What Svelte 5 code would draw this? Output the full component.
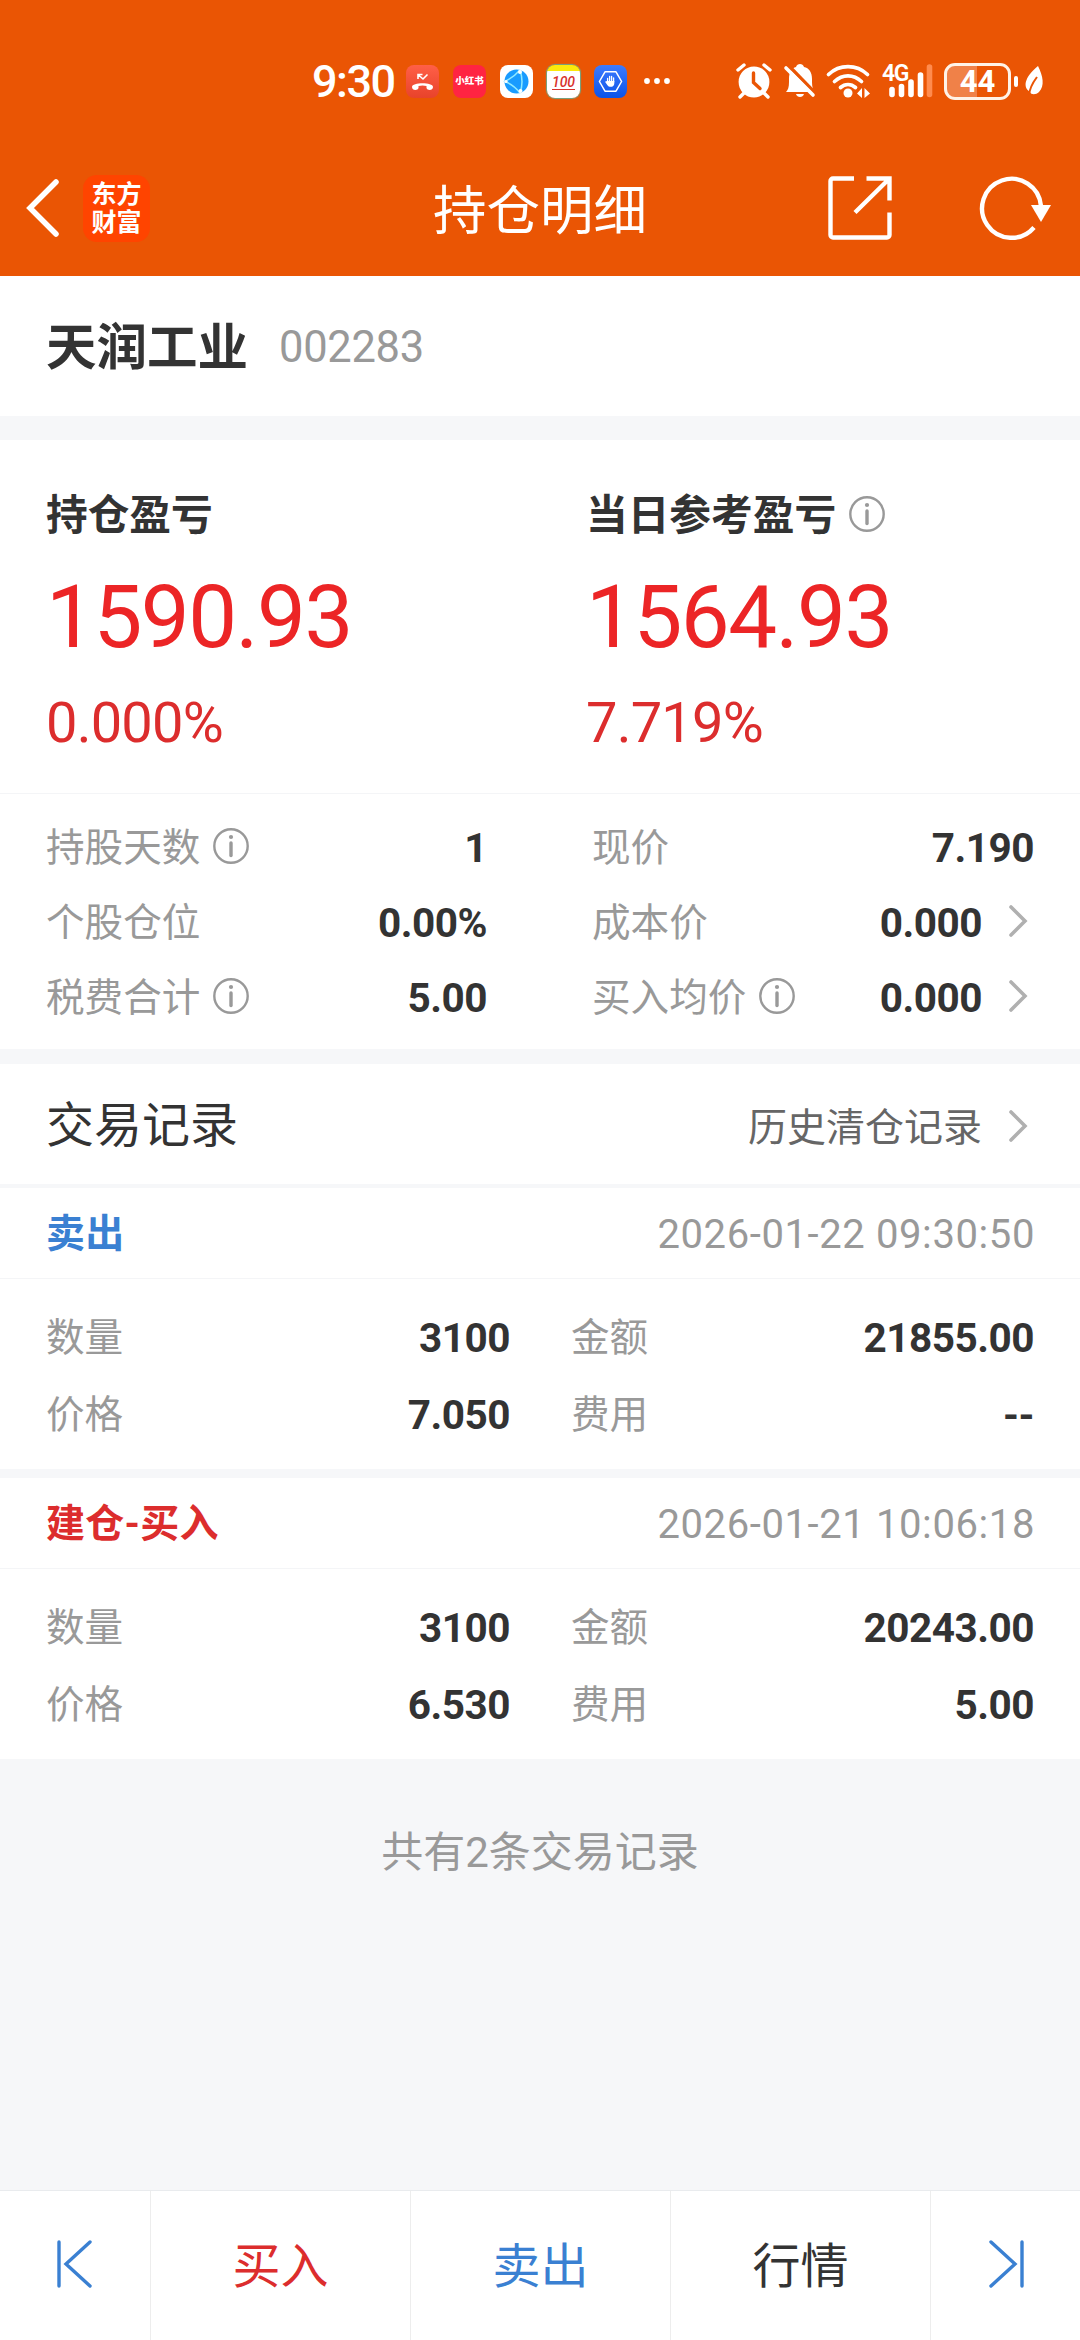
<script>
	const summary = [
		{ label: '持仓盈亏', amount: '1590.93', rate: '0.000%', info: false },
		{ label: '当日参考盈亏', amount: '1564.93', rate: '7.719%', info: true }
	];

	const stats = [
		{ label: '持股天数', value: '1', info: true },
		{ label: '现价', value: '7.190' },
		{ label: '个股仓位', value: '0.00%' },
		{ label: '成本价', value: '0.000', link: true },
		{ label: '税费合计', value: '5.00', info: true },
		{ label: '买入均价', value: '0.000', info: true, link: true }
	];

	const records = [
		{
			type: 'sell',
			title: '卖出',
			time: '2026-01-22 09:30:50',
			count: '3100',
			amount: '21855.00',
			price: '7.050',
			fee: '--'
		},
		{
			type: 'buy',
			title: '建仓-买入',
			time: '2026-01-21 10:06:18',
			count: '3100',
			amount: '20243.00',
			price: '6.530',
			fee: '5.00'
		}
	];
</script>

{#snippet infoIcon()}
	<svg class="info" viewBox="0 0 36 36">
		<circle cx="18" cy="18" r="16.7" fill="none" stroke="currentColor" stroke-width="2.4" />
		<circle cx="18" cy="9" r="2.1" fill="currentColor" />
		<path d="M18 15v12.5" stroke="currentColor" stroke-width="3.4" stroke-linecap="round" />
	</svg>
{/snippet}

{#snippet chevron()}
	<svg class="chevron" viewBox="0 0 20 34" fill="none" stroke="#b0b0b0" stroke-width="3.6" stroke-linecap="round">
		<path d="M3 3l14 14L3 31" />
	</svg>
{/snippet}

<div class="page">
	<header>
		<div class="status-bar">
			<div class="status-left">
				<span class="clock">9:30</span>
				<svg class="app" viewBox="0 0 33 33">
					<defs>
						<linearGradient id="call" x1="0" y1="0" x2="0" y2="1">
							<stop offset="0" stop-color="#ff5f47" />
							<stop offset="1" stop-color="#e8432b" />
						</linearGradient>
					</defs>
					<rect width="33" height="33" rx="8" fill="url(#call)" />
					<path d="M6 22c0-5 21-5 21 0 0 4-6 3.500-6.500 1v-2c-3-.8-5-.8-8 0v2c-.5 2.500-6.500 3-6.500-1z" fill="#fff" />
					<path d="M12 14v-4.500h4.500M12.500 10l4.500 4 4.500-4.500" fill="none" stroke="#fff" stroke-width="1.600" />
				</svg>
				<span class="app red-book">小红书</span>
				<svg class="app" viewBox="0 0 33 33">
					<rect width="33" height="33" rx="8" fill="#fff" />
					<circle cx="16.500" cy="16.500" r="12" fill="#189bff" />
					<path d="M20 5Q14 12 5 16.500Q14 20 20 28M20 5q4 12 0 23" fill="none" stroke="#8feaff" stroke-width="1.500" />
					<circle cx="20" cy="7" r="2" fill="#fff" />
					<circle cx="6" cy="16.500" r="1.600" fill="#fff" />
					<circle cx="20.500" cy="26" r="2" fill="#fff" />
				</svg>
				<span class="app score"><i>100</i></span>
				<svg class="app" viewBox="0 0 33 33">
					<defs>
						<linearGradient id="guard" x1="0" y1="0" x2="0" y2="1">
							<stop offset="0" stop-color="#3d7bff" />
							<stop offset="1" stop-color="#0b53e8" />
						</linearGradient>
					</defs>
					<rect width="33" height="33" rx="8" fill="url(#guard)" />
					<path d="M11 6.800h11l5.600 9.700L22 26.200H11L5.400 16.500z" fill="none" stroke="#fff" stroke-width="1.500" stroke-linejoin="round" />
					<path d="M13.600 17v-3.500M15.600 16v-4.500M17.600 16v-4.500M19.600 17v-4" stroke="#fff" stroke-width="1.300" stroke-linecap="round" />
					<path d="M12.900 16h7.400v2.500c0 4.200-5.600 4.200-7 1.500l-2.300-3.200z" fill="#fff" />
				</svg>
				<svg class="more" viewBox="0 0 28 8" fill="#fff">
					<circle cx="4" cy="4" r="2.900" />
					<circle cx="14" cy="4" r="2.900" />
					<circle cx="24" cy="4" r="2.900" />
				</svg>
			</div>
			<div class="status-right">
				<svg class="alarm" viewBox="0 0 36 36">
					<circle cx="18" cy="19" r="15.400" fill="#fff" />
					<path d="M2 7l6-5M34 7l-6-5M8 30l-4 4M28 30l4 4" stroke="#fff" stroke-width="3.400" stroke-linecap="round" />
					<path d="M17.500 10v9.500l6.500 6" fill="none" stroke="#ea5504" stroke-width="3.400" stroke-linecap="round" />
				</svg>
				<svg class="bell" viewBox="0 0 32 36">
					<path d="M2 29c2-2 3-5 3-10v-3C5 9 8 5 12 4c1-4 7-4 8 0 5 1 8 5 8 12v3c0 5 1 8 3 10z" fill="#fff" />
					<path d="M12 31h8c-1 4-7 4-8 0z" fill="#fff" />
					<path d="M4 2l30 31" stroke="#ea5504" stroke-width="3.500" />
					<path d="M2 5l27 27" stroke="#fff" stroke-width="3.600" stroke-linecap="round" />
				</svg>
				<svg class="wifi" viewBox="0 0 44 36">
					<path d="M2.500 11.500c11-10.500 28-10.500 39 0M8.500 18.500c8-7.500 19-7.500 27 0M14.500 24.500c4.500-4 10.500-4 15 0" fill="none" stroke="#fff" stroke-width="3.700" stroke-linecap="round" />
					<circle cx="22" cy="30" r="4.500" fill="#fff" />
					<path d="M36 25v10l-5-4.500zM38.500 25v10l5.500-4.500z" fill="#fff" />
				</svg>
				<svg class="signal" viewBox="0 0 51 36">
					<text x="0" y="18" class="network">4G</text>
					<path d="M10 26.500v5M19.500 23.500v8M29 19v12.500M38.500 12v19.500" stroke="#fff" stroke-width="5.600" stroke-linecap="round" />
					<path d="M47.500 4v27.500" stroke="#ff8b4e" stroke-width="5.600" stroke-linecap="round" />
				</svg>
				<span class="battery">44</span>
				<span class="battery-tip"></span>
				<svg class="leaf" viewBox="0 0 18 30">
					<path d="M13 0c5 10 7 20 1 26-3 3-8 3-9 0C-4 20 2 9 13 0z" fill="#fff" />
					<path d="M12 11C9 15 5 20 4 29" fill="none" stroke="#ea5504" stroke-width="2" />
				</svg>
			</div>
		</div>

		<div class="nav">
			<div class="nav-side">
				<svg class="back" viewBox="0 0 34 56" fill="none" stroke="#fff" stroke-width="5.500">
					<path d="M31 2L5 28l26 26" stroke-linecap="round" />
				</svg>
				<div class="logo"><span>东方</span><span>财富</span></div>
			</div>
			<h1>持仓明细</h1>
			<div class="nav-side nav-actions">
				<svg class="share" viewBox="0 0 64 64" fill="none" stroke="#fff" stroke-width="4.400">
					<path d="M26 2.500H5a2.500 2.500 0 0 0-2.500 2.500v54a2.500 2.500 0 0 0 2.500 2.500h54a2.500 2.500 0 0 0 2.500-2.500V36.500" />
					<path d="M38.500 2.500h23v22M60.500 3.500L27 36.500" />
				</svg>
				<svg class="refresh" viewBox="0 0 72 64">
					<path d="M61 30A29.500 29.500 0 1 0 54 51.500" fill="none" stroke="#fff" stroke-width="4.400" />
					<path d="M51 29h20L61 46z" fill="#fff" />
				</svg>
			</div>
		</div>
	</header>

	<section class="stock">
		<h2>天润工业</h2>
		<span class="code">002283</span>
	</section>

	<section class="position">
		<div class="summary">
			{#each summary as item}
				<div class="profit">
					<div class="profit-label">
						{item.label}
						{#if item.info}{@render infoIcon()}{/if}
					</div>
					<div class="profit-amount">{item.amount}</div>
					<div class="profit-rate">{item.rate}</div>
				</div>
			{/each}
		</div>

		<div class="stats">
			{#each stats as item}
				<div class="row">
					<span class="label">
						{item.label}
						{#if item.info}{@render infoIcon()}{/if}
					</span>
					<span class="value">
						{item.value}
						{#if item.link}{@render chevron()}{/if}
					</span>
				</div>
			{/each}
		</div>
	</section>

	<section class="history">
		<h3>交易记录</h3>
		<span class="history-link">历史清仓记录 {@render chevron()}</span>
	</section>

	{#each records as record}
		<section class="record">
			<div class="record-head">
				<span class="record-title {record.type}">{record.title}</span>
				<time>{record.time}</time>
			</div>
			<div class="record-body">
				<div class="row"><span class="label">数量</span><span class="value">{record.count}</span></div>
				<div class="row"><span class="label">金额</span><span class="value">{record.amount}</span></div>
				<div class="row"><span class="label">价格</span><span class="value">{record.price}</span></div>
				<div class="row"><span class="label">费用</span><span class="value">{record.fee}</span></div>
			</div>
		</section>
	{/each}

	<p class="total">共有2条交易记录</p>

	<footer>
		<button aria-label="上一只">
			<svg viewBox="0 0 36 48" fill="none" stroke="#3a80d2" stroke-width="3.4" stroke-linecap="round">
				<path d="M2 2v44M33 2L9 24l24 22" />
			</svg>
		</button>
		<button class="buy">买入</button>
		<button class="sell">卖出</button>
		<button>行情</button>
		<button aria-label="下一只">
			<svg viewBox="0 0 36 48" fill="none" stroke="#3a80d2" stroke-width="3.4" stroke-linecap="round">
				<path d="M34 2v44M3 2l24 22L3 46" />
			</svg>
		</button>
	</footer>
</div>

<style>
	:global(body) {
		margin: 0;
	}

	.page {
		display: flex;
		flex-direction: column;
		width: 1080px;
		height: 2340px;
		background: #f6f7f9;
		color: #333;
		font-family: Roboto, 'Noto Sans CJK SC', sans-serif;
		font-size: 39px;
		line-height: 1;
		overflow: hidden;
	}

	h1,
	h2,
	h3,
	p {
		margin: 0;
	}

	svg {
		flex-shrink: 0;
		overflow: visible;
	}

	header {
		height: 276px;
		flex-shrink: 0;
		background: #ea5504;
		color: #fff;
	}

	.status-bar {
		display: flex;
		justify-content: space-between;
		align-items: center;
		height: 140px;
		padding: 22px 37px 0 312px;
		box-sizing: border-box;
	}

	.status-left,
	.status-right {
		display: flex;
		align-items: center;
	}

	.status-left {
		gap: 14px;
	}

	.clock {
		width: 80px;
		font-size: 45px;
		font-weight: 500;
		letter-spacing: -1.5px;
	}

	.app {
		width: 33px;
		height: 33px;
		border-radius: 8px;
	}

	.red-book {
		display: flex;
		align-items: center;
		justify-content: center;
		background: #ff2442;
		font-size: 9.5px;
		font-weight: 900;
	}

	.score {
		display: flex;
		align-items: center;
		justify-content: center;
		box-sizing: border-box;
		padding-top: 3px;
		background: linear-gradient(#fbe90c 6px, #fff 6px);
		box-shadow: 0 0 1px 1px #6ea98a;
		color: #d8322c;
		font-size: 14px;
		font-weight: 500;
	}

	.score i {
		border-bottom: 1px solid #d8322c;
	}

	.more {
		width: 28px;
		height: 8px;
		margin-left: 2px;
	}

	.alarm {
		width: 36px;
		height: 36px;
		margin-right: 12px;
	}

	.bell {
		width: 32px;
		height: 36px;
		margin-right: 10px;
	}

	.wifi {
		width: 44px;
		height: 36px;
		margin-right: 12px;
	}

	.signal {
		width: 51px;
		height: 36px;
		margin-right: 11px;
	}

	.network {
		fill: #fff;
		font-size: 23px;
		font-weight: 600;
		letter-spacing: -1.5px;
	}

	.battery {
		width: 67px;
		height: 37px;
		box-sizing: border-box;
		border: 3px solid #fff3e8;
		border-radius: 11px;
		background: linear-gradient(90deg, #f08148 30px, transparent 30px);
		font-size: 31px;
		font-weight: 700;
		line-height: 32px;
		text-align: center;
	}

	.battery-tip {
		width: 4px;
		height: 11px;
		margin: 0 7px 0 3px;
		border-radius: 2px;
		background: #fff;
	}

	.leaf {
		width: 18px;
		height: 30px;
	}

	.nav {
		display: flex;
		justify-content: space-between;
		align-items: center;
		height: 136px;
		padding: 0 28px;
	}

	.nav-side {
		display: flex;
		align-items: center;
		flex: 1;
	}

	.back {
		width: 34px;
		height: 56px;
		margin: 0 24px 0 -3px;
	}

	.logo {
		display: flex;
		flex-direction: column;
		align-items: center;
		justify-content: center;
		gap: 3px;
		width: 67px;
		height: 67px;
		border-radius: 14px;
		background: #ff4400;
		font-size: 25px;
		font-weight: 700;
	}

	h1 {
		padding-top: 7px;
		font-size: 53.5px;
		font-weight: 400;
	}

	.nav-actions {
		justify-content: flex-end;
		gap: 88px;
	}

	.share {
		width: 64px;
		height: 64px;
	}

	.refresh {
		width: 72px;
		height: 64px;
	}

	.stock {
		display: flex;
		align-items: center;
		height: 140px;
		padding-left: 46px;
		margin-bottom: 24px;
		background: #fff;
	}

	h2 {
		padding-top: 5px;
		font-size: 50.5px;
		font-weight: 700;
	}

	.code {
		padding-top: 4px;
		margin-left: 31px;
		color: #999;
		font-size: 43.5px;
		letter-spacing: -0.3px;
	}

	.position {
		margin-bottom: 15px;
		background: #fff;
	}

	.summary {
		display: grid;
		grid-template-columns: 540px 1fr;
		height: 354px;
		padding-left: 46px;
		box-sizing: border-box;
		border-bottom: 1px solid #f4f5f7;
	}

	.profit {
		padding-top: 55px;
	}

	.profit-label {
		display: flex;
		align-items: center;
		height: 42px;
		font-size: 41.7px;
		font-weight: 700;
	}

	.profit-amount {
		margin-top: 37px;
		color: #ec2526;
		font-size: 87px;
		letter-spacing: -1.5px;
	}

	.profit-rate {
		margin-top: 34px;
		color: #dc2d2d;
		font-size: 56px;
		letter-spacing: -0.8px;
	}

	.info {
		width: 36px;
		height: 36px;
		margin: 0 0 5px 13px;
		color: #999;
	}

	.stats {
		display: grid;
		grid-template-columns: 441px 442px;
		grid-auto-rows: 75px;
		column-gap: 105px;
		padding: 15px 46px;
	}

	.row {
		display: flex;
		align-items: center;
		justify-content: space-between;
	}

	.label,
	.value {
		display: flex;
		align-items: center;
		padding-top: 3px;
	}

	.label {
		color: #999;
		font-size: 38.6px;
	}

	.value {
		font-size: 40.5px;
		font-weight: 700;
		letter-spacing: -0.5px;
	}

	.chevron {
		width: 20px;
		height: 34px;
		margin: 0 6px 4px 26px;
	}

	.history {
		display: flex;
		align-items: center;
		justify-content: space-between;
		height: 120px;
		padding: 0 46px;
		margin-bottom: 4px;
		background: #fff;
	}

	h3 {
		padding-top: 3px;
		font-size: 48px;
		font-weight: 400;
	}

	.history-link {
		display: flex;
		align-items: center;
		padding-top: 8px;
		color: #666;
	}

	.record {
		background: #fff;
	}

	.record + .record {
		margin-top: 9px;
	}

	.record-head {
		display: flex;
		align-items: center;
		justify-content: space-between;
		height: 91px;
		padding: 3px 46px 0;
		box-sizing: border-box;
		border-bottom: 1px solid #f4f5f7;
	}

	.record-title {
		font-weight: 700;
		letter-spacing: 0.3px;
	}

	time {
		margin-right: -1px;
		color: #999;
		font-size: 40px;
		letter-spacing: 0.6px;
	}

	.record-body {
		display: grid;
		grid-template-columns: 464px 463px;
		grid-auto-rows: 77px;
		column-gap: 61px;
		padding: 19px 46px 17px;
	}

	.buy {
		color: #dc2d2d;
	}

	.sell {
		color: #3a80d2;
	}

	.total {
		padding-top: 73px;
		color: #999;
		font-size: 42px;
		text-align: center;
	}

	footer {
		display: grid;
		grid-template-columns: 150px 260px 260px 260px 150px;
		height: 150px;
		box-sizing: border-box;
		margin-top: auto;
		border-top: 1px solid #e9ebee;
		background: #fff;
	}

	button {
		display: flex;
		align-items: center;
		justify-content: center;
		padding: 3px 0 0;
		border: 0;
		background: none;
		color: #333;
		font: inherit;
		font-size: 48px;
	}

	button.buy {
		color: #dc2d2d;
	}

	button.sell {
		color: #3a80d2;
	}

	button + button {
		border-left: 1px solid #ededed;
	}

	button svg {
		width: 36px;
		height: 48px;
		margin-bottom: 7px;
	}
</style>
